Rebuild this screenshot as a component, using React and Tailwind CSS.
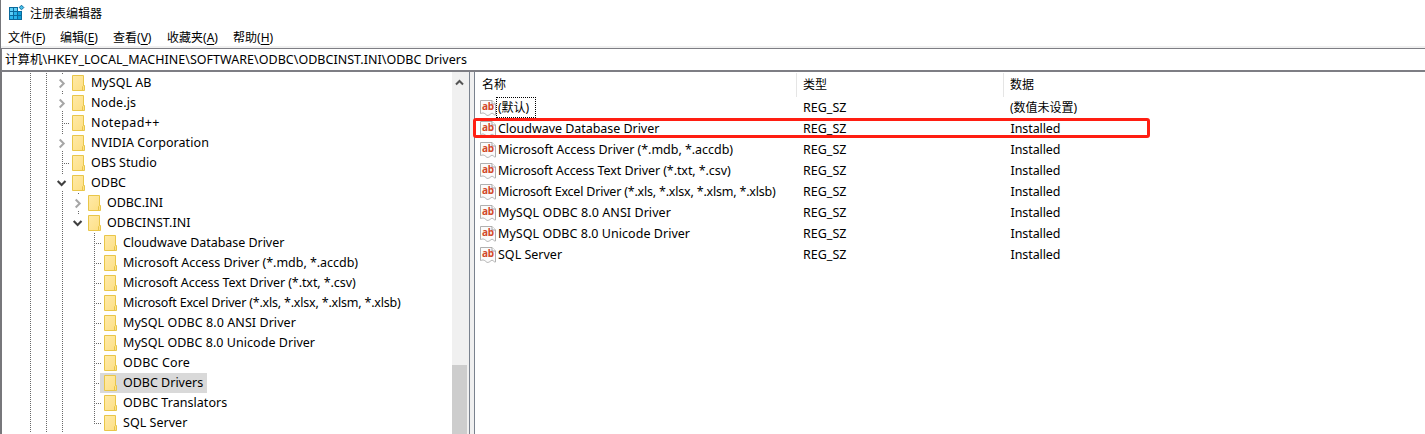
import React from "react";

const tree = [
  { label: "MySQL AB", level: 1, state: "closed", tracking: "tracking-[0.03px]" },
  { label: "Node.js", level: 1, state: "closed", tracking: "tracking-[0.1px]" },
  { label: "Notepad++", level: 1, state: "leaf", tracking: "tracking-[0.4px]" },
  { label: "NVIDIA Corporation", level: 1, state: "closed", tracking: "tracking-[0.07px]" },
  { label: "OBS Studio", level: 1, state: "leaf", tracking: "tracking-[0.03px]" },
  { label: "ODBC", level: 1, state: "open", tracking: "tracking-[0.03px]" },
  { label: "ODBC.INI", level: 2, state: "closed", tracking: "tracking-[-0.05px]" },
  { label: "ODBCINST.INI", level: 2, state: "open", tracking: "tracking-[0.05px]", last: true },
  { label: "Cloudwave Database Driver", level: 3, state: "leaf", tracking: "tracking-[-0.04px]" },
  { label: "Microsoft Access Driver (*.mdb, *.accdb)", level: 3, state: "leaf", tracking: "tracking-[-0.03px]" },
  { label: "Microsoft Access Text Driver (*.txt, *.csv)", level: 3, state: "leaf", tracking: "tracking-[-0.08px]" },
  { label: "Microsoft Excel Driver (*.xls, *.xlsx, *.xlsm, *.xlsb)", level: 3, state: "leaf", tracking: "tracking-[-0.2px]" },
  { label: "MySQL ODBC 8.0 ANSI Driver", level: 3, state: "leaf", tracking: "tracking-[0.07px]" },
  { label: "MySQL ODBC 8.0 Unicode Driver", level: 3, state: "leaf", tracking: "tracking-[0.04px]" },
  { label: "ODBC Core", level: 3, state: "leaf", tracking: "tracking-[0.15px]" },
  { label: "ODBC Drivers", level: 3, state: "leaf", selected: true, tracking: "tracking-[-0.01px]" },
  { label: "ODBC Translators", level: 3, state: "leaf", tracking: "tracking-[0.04px]" },
  { label: "SQL Server", level: 3, state: "leaf", last: true, tracking: "tracking-[0.03px]" },
];

const values = [
  ["(默认)", ""],
  ["Cloudwave Database Driver", "tracking-[-0.04px]"],
  ["Microsoft Access Driver (*.mdb, *.accdb)", "tracking-[-0.03px]"],
  ["Microsoft Access Text Driver (*.txt, *.csv)", "tracking-[-0.08px]"],
  ["Microsoft Excel Driver (*.xls, *.xlsx, *.xlsm, *.xlsb)", "tracking-[-0.2px]"],
  ["MySQL ODBC 8.0 ANSI Driver", "tracking-[0.07px]"],
  ["MySQL ODBC 8.0 Unicode Driver", "tracking-[0.04px]"],
  ["SQL Server", ""],
];

const menus = [
  ["文件", "F", "w-[52px]"],
  ["编辑", "E", "w-[53px]"],
  ["查看", "V", "w-[54px]"],
  ["收藏夹", "A", "w-[66px]"],
  ["帮助", "H", "w-[60px]"],
];

function AppIcon() {
  return (
    <svg width="17" height="17" viewBox="0 0 17 17" shapeRendering="crispEdges" className="shrink-0">
      <path fill="#0b6a9c" d="M0 2h9v4h4v9H0z" />
      <path fill="#5fd0f7" d="M1 3h3v3H1zM5 3h3v3H5zM1 7h3v3H1z" />
      <path fill="#2bb5ea" d="M5 7h3v3H5zM1 11h3v3H1zM5 11h3v3H5z" />
      <path fill="#0f9fd8" d="M9 7h3v3H9zM9 11h3v3H9z" />
      <path fill="#45bfea" stroke="#0b6a9c" shapeRendering="auto" d="M12.500.2l2.300 2.300-2.300 2.300-2.300-2.300z" />
    </svg>
  );
}

function Folder() {
  return (
    <svg width="13" height="16" viewBox="0 0 13 16" className="shrink-0">
      <defs>
        <linearGradient id="folder" x1="0" x2="1" y1="0" y2="1">
          <stop offset="0" stopColor="#ffeaa8" />
          <stop offset="1" stopColor="#fddf84" />
        </linearGradient>
      </defs>
      <path d="M.5.5h11v10h1v5H.5z" fill="url(#folder)" stroke="#e9c649" />
      <path d="M10.5 15.5v-4l1-1" fill="none" stroke="#e9c649" />
    </svg>
  );
}

function StringIcon() {
  return (
    <span className="relative flex h-4 w-4 shrink-0">
      <svg width="16" height="16" viewBox="0 0 16 16">
        <path
          d="M.5.5h11.5l3.500 3.500v11c-1 .4-1.600-.8-2.700-1.500-1.200-.6-2.100.5-3.300 1.300-1.100.7-2.300 1-3.300 0C5.100 13.700 4 13 2.800 13c-.9 0-1.300.5-2.300.5z"
          fill="#fbfbfb"
          stroke="#b0b0b0"
        />
        <path d="M12 .5V4h3.500" fill="#fff" stroke="#a3a3a3" />
      </svg>
      <span className="absolute left-[2px] top-[-1px] font-['Noto_Sans'] text-[10px] font-bold leading-[14px] tracking-[-0.2px] text-[#d2492a]">ab</span>
    </span>
  );
}

function Guide({ kind, end }) {
  return (
    <svg width="16" height="20" viewBox="0 0 16 20" className="shrink-0" fill="none">
      {kind === "line" && <path d="M8.500 0v20" stroke="#686868" strokeDasharray="1 1" />}
      {kind === "leaf" && <path d={end ? "M8.500 0v11M10 10.500h6" : "M8.500 0v20M10 10.500h6"} stroke="#686868" strokeDasharray="1 1" />}
      {(kind === "closed" || kind === "open") && (
        <path d={end ? "M8.500 0v1" : "M8.500 0v1M8.500 18v2"} stroke="#686868" strokeDasharray="1 1" />
      )}
      {kind === "closed" && <path d="M5.700 6.500l4 4-4 4" stroke="#a6a6a6" strokeWidth="2" />}
      {kind === "open" && <path d="M3.700 8l3.900 3.900L11.500 8" stroke="#404040" strokeWidth="2.100" />}
    </svg>
  );
}

function TreeRow({ item }) {
  const parents = item.level === 1 ? ["line", "line"] : item.level === 2 ? ["line", "line", "line"] : ["line", "line", "line", "blank"];
  return (
    <div className="flex h-5 shrink-0 items-center pl-5">
      {parents.map((kind, i) => (
        <Guide key={i} kind={kind} />
      ))}
      <Guide kind={item.state} end={item.last} />
      <div className={`-ml-0.5 flex h-5 items-center gap-1.5 pl-1 pr-1 ${item.selected ? "bg-[#d9d9d9]" : ""}`}>
        <Folder />
        <span className={`whitespace-nowrap ${item.tracking}`}>{item.label}</span>
      </div>
    </div>
  );
}

export default function App() {
  return (
    <div className="flex h-[434px] w-[1425px] flex-col overflow-hidden bg-white font-['Noto_Sans','Noto_Sans_CJK_SC',sans-serif] text-[12.500px] leading-5 text-black">
      <header className="flex h-[46px] shrink-0 flex-col border-l border-[#77777b]">
        <div className="flex h-[27px] shrink-0 items-center gap-1 pl-2">
          <AppIcon />
          <h1 className="text-[12px]">注册表编辑器</h1>
        </div>
        <nav className="flex h-[19px] items-center pl-[7px] pt-0.5 text-[12px]">
          {menus.map(([name, key, width]) => (
            <span key={key} className={`${width} whitespace-nowrap`}>
              {name}(<u className="underline-offset-2">{key}</u>)
            </span>
          ))}
        </nav>
      </header>
      <div className="h-[26px] shrink-0 border-l border-[#77777b] bg-[#f0f0f0] pt-0.5">
        <div className="flex h-6 items-center border-b-2 border-l border-t border-[#7e7e84] bg-white pl-[3px]">
          <span className="whitespace-nowrap tracking-[0.025px]">计算机\HKEY_LOCAL_MACHINE\SOFTWARE\ODBC\ODBCINST.INI\ODBC Drivers</span>
        </div>
      </div>
      <main className="flex min-h-0 flex-1">
        <aside className="flex w-[470px] border-l-2 border-r border-l-[#77777b] border-r-[#7a828e]">
          <div className="flex w-[450px] flex-col overflow-hidden pt-px">
            {tree.map((item) => (
              <TreeRow key={item.label} item={item} />
            ))}
          </div>
          <div className="flex w-[17px] flex-col bg-[#f0f0f0]">
            <svg width="16" height="20" viewBox="0 0 16 20" fill="none">
              <path d="M4 12.500L7.500 9l3.500 3.500" stroke="#555" strokeWidth="2" />
            </svg>
            <div className="mt-[273px] w-[15px] flex-1 bg-[#cdcdcd]" />
          </div>
        </aside>
        <div className="w-1 bg-[#f0f0f0]" />
        <section className="relative flex flex-1 flex-col border-l border-[#7a828e]">
          <div className="flex h-[25px] items-start pt-px">
            <div className="flex h-6 w-[322px] items-center border-r border-[#e5e5e5] pl-[7px] text-[12px]">名称</div>
            <div className="flex h-6 w-[207px] items-center border-r border-[#e5e5e5] pl-1.5 text-[12px]">类型</div>
            <div className="flex h-6 items-center pl-1.5 text-[12px]">数据</div>
          </div>
          {values.map(([name, tracking], i) => (
            <div key={name} className="flex h-[21px] items-center">
              <div className="flex w-[328px] items-center pl-[5px]">
                <StringIcon />
                <span className={i === 0 ? "flex h-[21px] w-[40px] items-center whitespace-nowrap border border-dotted border-black pl-px text-[12px]" : `whitespace-nowrap pl-0.5 ${tracking}`}>
                  {name}
                </span>
              </div>
              <span className="w-[207px]">REG_SZ</span>
              <span className={i === 0 ? "text-[12px]" : "pl-[0.5px] tracking-[-0.08px]"}>{i === 0 ? "(数值未设置)" : "Installed"}</span>
            </div>
          ))}
          <div className="absolute -left-[2px] top-[46px] h-5 w-[677px] rounded-[3px] border-[3px] border-[#ff1e12]" />
        </section>
      </main>
    </div>
  );
}
